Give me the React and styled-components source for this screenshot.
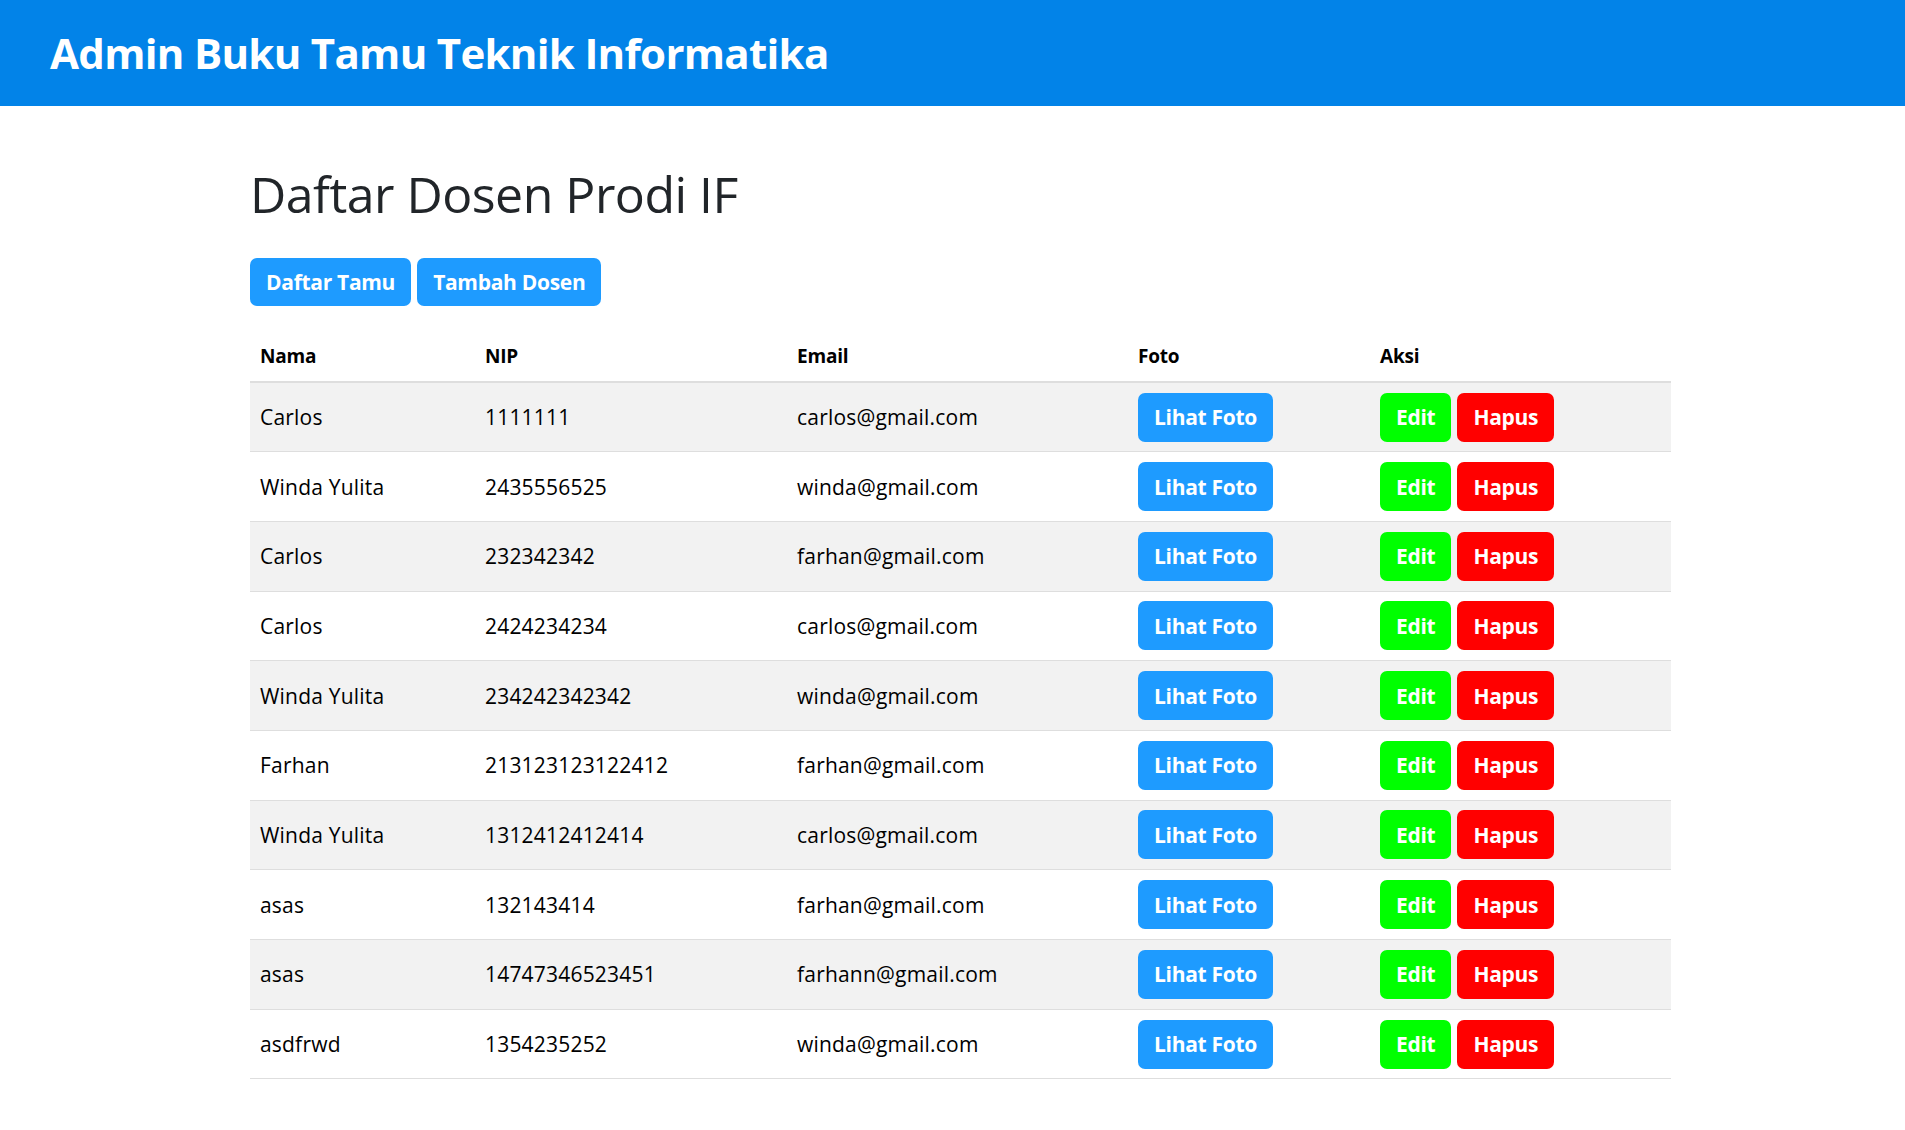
import React from "react";
import styled, { createGlobalStyle } from "styled-components";

const dosen = [
  { nama: "Carlos", nip: "1111111", email: "carlos@gmail.com" },
  { nama: "Winda Yulita", nip: "2435556525", email: "winda@gmail.com" },
  { nama: "Carlos", nip: "232342342", email: "farhan@gmail.com" },
  { nama: "Carlos", nip: "2424234234", email: "carlos@gmail.com" },
  { nama: "Winda Yulita", nip: "234242342342", email: "winda@gmail.com" },
  { nama: "Farhan", nip: "213123123122412", email: "farhan@gmail.com" },
  { nama: "Winda Yulita", nip: "1312412412414", email: "carlos@gmail.com" },
  { nama: "asas", nip: "132143414", email: "farhan@gmail.com" },
  { nama: "asas", nip: "14747346523451", email: "farhann@gmail.com" },
  { nama: "asdfrwd", nip: "1354235252", email: "winda@gmail.com" },
];

const GlobalStyle = createGlobalStyle`
  * { box-sizing: border-box; }
  body {
    margin: 0;
    background: #fff;
    font-family: "Open Sans", "Noto Sans", sans-serif;
    color: #212529;
  }
`;

function App() {
  return (
    <>
      <GlobalStyle />
      <TopBar>
        <BrandTitle>Admin Buku Tamu Teknik Informatika</BrandTitle>
      </TopBar>
      <Main>
        <PageTitle>Daftar Dosen Prodi IF</PageTitle>
        <ButtonRow>
          <ActionButton $color="#1e9bff">Daftar Tamu</ActionButton>
          <ActionButton $color="#1e9bff">Tambah Dosen</ActionButton>
        </ButtonRow>
        <Table>
          <colgroup>
            <col style={{ width: 225 }} />
            <col style={{ width: 312 }} />
            <col style={{ width: 341 }} />
            <col style={{ width: 242 }} />
            <col style={{ width: 301 }} />
          </colgroup>
          <thead>
            <tr>
              <Th>Nama</Th>
              <Th>NIP</Th>
              <Th>Email</Th>
              <Th>Foto</Th>
              <Th>Aksi</Th>
            </tr>
          </thead>
          <tbody>
            {dosen.map((d, i) => (
              <Row key={i} $striped={i % 2 === 0}>
                <Td>{d.nama}</Td>
                <Td>{d.nip}</Td>
                <Td>{d.email}</Td>
                <Td>
                  <ActionButton $color="#1e9bff" $row>
                    Lihat Foto
                  </ActionButton>
                </Td>
                <Td>
                  <ButtonGroup>
                    <ActionButton $color="#00ff00" $row>
                      Edit
                    </ActionButton>
                    <ActionButton $color="#ff0000" $row>
                      Hapus
                    </ActionButton>
                  </ButtonGroup>
                </Td>
              </Row>
            ))}
          </tbody>
        </Table>
      </Main>
    </>
  );
}

export default App;

const TopBar = styled.header`
  height: 106px;
  background-color: #0283e8;
  display: flex;
  align-items: center;
  padding-left: 50px;
`;

const BrandTitle = styled.h1`
  margin: 0;
  color: #fff;
  font-size: 42px;
  font-weight: 700;
  line-height: 1;
  letter-spacing: -0.7px;
`;

const Main = styled.main`
  width: 1421px;
  margin-left: 250px;
  padding-top: 58px;
  padding-bottom: 30px;
`;

const PageTitle = styled.h2`
  margin: 0 0 34px;
  font-size: 50px;
  font-weight: 400;
  line-height: 60px;
  color: #212529;
  letter-spacing: -0.5px;
`;

const ButtonRow = styled.div`
  display: flex;
  gap: 6px;
  margin-bottom: 25px;
`;

const ActionButton = styled.button`
  height: ${(p) => (p.$row ? "49px" : "48px")};
  padding: 0 16px;
  border: none;
  border-radius: 7px;
  background-color: ${(p) => p.$color};
  color: #fff;
  font-family: "Open Sans", "Noto Sans", sans-serif;
  font-size: 21px;
  font-weight: 700;
  letter-spacing: -0.3px;
  cursor: pointer;
`;

const ButtonGroup = styled.div`
  display: flex;
  gap: 6px;
`;

const Table = styled.table`
  width: 1421px;
  table-layout: fixed;
  border-collapse: collapse;
`;

const Th = styled.th`
  text-align: left;
  height: 51px;
  padding: 0 10px;
  font-size: 19px;
  font-weight: 700;
  color: #000;
  border-bottom: 2px solid #dedede;
  letter-spacing: -0.2px;
`;

const Row = styled.tr`
  background-color: ${(p) => (p.$striped ? "#f2f2f2" : "#fff")};
  border-bottom: 1px solid #dedede;
`;

const Td = styled.td`
  height: 69.7px;
  padding: 0 10px;
  font-size: 21px;
  color: #000;
  vertical-align: middle;
  letter-spacing: 0.2px;
`;
